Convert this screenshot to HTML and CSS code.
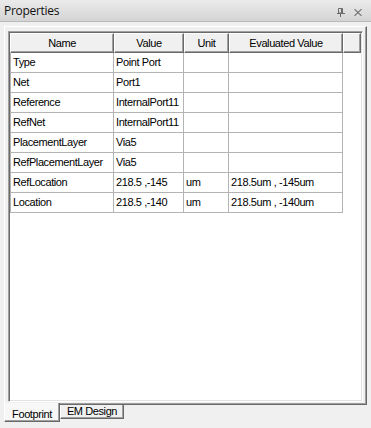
FILE: index.html
```html
<!DOCTYPE html>
<html>
<head>
<meta charset="utf-8">
<link rel="stylesheet" href="styles.css">
</head>
<body>
<div class="titlebar">
  <span class="title">Properties</span>
  <span class="tools">
    <svg class="pin" width="8" height="9" viewBox="0 0 8 9">
      <path d="M1.5 0.5h4v4.5h-4z" fill="none" stroke="#6a6a6a"/>
      <path d="M4.5 0.5v4.5" stroke="#6a6a6a"/>
      <path d="M0 5.5h8" stroke="#6a6a6a"/>
      <path d="M3.5 5.5v3.5" stroke="#6a6a6a"/>
    </svg>
    <svg class="close" width="8" height="7" viewBox="0 0 8 7">
      <path d="M0.5 0.2l7 6.6M7.5 0.2l-7 6.6" stroke="#6a6a6a" stroke-width="1.1"/>
    </svg>
  </span>
</div>
<div class="panel">
  <div class="frame">
    <div class="grid">
      <div class="hdr">
        <div class="hc c1">Name</div>
        <div class="hc c2">Value</div>
        <div class="hc c3">Unit</div>
        <div class="hc c4">Evaluated Value</div>
        <div class="hc c5"></div>
      </div>
      <div class="row"><div class="cell c1">Type</div><div class="cell c2">Point Port</div><div class="cell c3"></div><div class="cell c4"></div></div>
      <div class="row"><div class="cell c1">Net</div><div class="cell c2">Port1</div><div class="cell c3"></div><div class="cell c4"></div></div>
      <div class="row"><div class="cell c1">Reference</div><div class="cell c2">InternalPort11</div><div class="cell c3"></div><div class="cell c4"></div></div>
      <div class="row"><div class="cell c1">RefNet</div><div class="cell c2">InternalPort11</div><div class="cell c3"></div><div class="cell c4"></div></div>
      <div class="row"><div class="cell c1">PlacementLayer</div><div class="cell c2">Via5</div><div class="cell c3"></div><div class="cell c4"></div></div>
      <div class="row"><div class="cell c1">RefPlacementLayer</div><div class="cell c2">Via5</div><div class="cell c3"></div><div class="cell c4"></div></div>
      <div class="row"><div class="cell c1">RefLocation</div><div class="cell c2">218.5 ,-145</div><div class="cell c3">um</div><div class="cell c4">218.5um , -145um</div></div>
      <div class="row"><div class="cell c1">Location</div><div class="cell c2">218.5 ,-140</div><div class="cell c3">um</div><div class="cell c4">218.5um , -140um</div></div>
    </div>
  </div>
  <div class="tabs">
    <div class="tab sel">Footprint</div>
    <div class="tab">EM Design</div>
  </div>
</div>
</body>
</html>
```

FILE: styles.css
```css
* { box-sizing: border-box; }
html, body { margin: 0; padding: 0; }
body {
  width: 371px;
  height: 428px;
  overflow: hidden;
  background: #f0f0f0;
  font-family: "Liberation Sans", Arial, sans-serif;
  font-size: 11px;
  letter-spacing: -0.4px;
  color: #000;
}
.titlebar {
  height: 22px;
  border-bottom: 1px solid #b9b9b9;
  background: linear-gradient(#ebebeb, #d4d4d4);
  display: flex;
  justify-content: space-between;
  align-items: center;
  padding: 0 9px 0 4px;
}
.title {
  font-family: "Open Sans", "Noto Sans", sans-serif;
  font-size: 12px;
  letter-spacing: -0.3px;
  color: #111;
}
.tools {
  align-self: flex-start;
  display: flex;
  align-items: flex-start;
  gap: 9px;
  padding-top: 8px;
}
.pin, .close { display: block; }
.close { margin-top: 1px; }
.panel { padding: 4px 4px 0 4px; }
.frame {
  background: #f0f0f0;
  border-top: 1px solid #fff;
  border-left: 1px solid #fff;
  border-right: 1px solid #696969;
  border-bottom: 1px solid #696969;
  box-shadow: inset -1px -1px 0 #a0a0a0;
  padding: 4px 3px 2px 3px;
}
.grid {
  height: 371px;
  background: #fff;
  border: 1px solid;
  border-color: #a0a0a0 #fff #fff #a0a0a0;
  box-shadow: inset 1px 1px 0 #696969, inset -1px -1px 0 #e3e3e3;
  padding: 1px;
}
.hdr { display: flex; height: 20px; }
.hc {
  height: 20px;
  background: #f0f0f0;
  border-top: 1px solid #fff;
  border-left: 1px solid #fff;
  border-right: 1px solid #696969;
  border-bottom: 1px solid #696969;
  box-shadow: inset -1px -1px 0 #a0a0a0;
  text-align: center;
  line-height: 18px;
  white-space: nowrap;
  overflow: hidden;
}
.hdr .c1 { width: 104px; }
.hdr .c2 { width: 70px; }
.hdr .c3 { width: 45px; }
.hdr .c4 { width: 114px; }
.hdr .c5 { flex: 1; }
.row {
  display: flex;
  width: 333px;
  height: 20px;
  border-left: 1px solid #b4b4b4;
}
.cell {
  height: 20px;
  border-right: 1px solid #b4b4b4;
  border-bottom: 1px solid #b4b4b4;
  padding-left: 2px;
  line-height: 19px;
  white-space: nowrap;
  overflow: hidden;
}
.row .c1 { width: 103px; }
.row .c2 { width: 70px; }
.row .c3 { width: 45px; }
.row .c4 { width: 114px; }
.tabs {
  display: flex;
  align-items: flex-start;
  margin-top: -2px;
}
.tab {
  height: 14px;
  margin-top: 2px;
  width: 64px;
  text-align: center;
  line-height: 13px;
  background: #f0f0f0;
  border-left: 1px solid #fff;
  border-right: 1px solid #696969;
  border-bottom: 1px solid #696969;
  box-shadow: inset -1px -1px 0 #a0a0a0;
}
.tab.sel {
  position: relative;
  z-index: 1;
  width: 56px;
  height: 19px;
  margin-top: 0;
  padding-top: 5px;
  background: #f7f7f7;
}
```
